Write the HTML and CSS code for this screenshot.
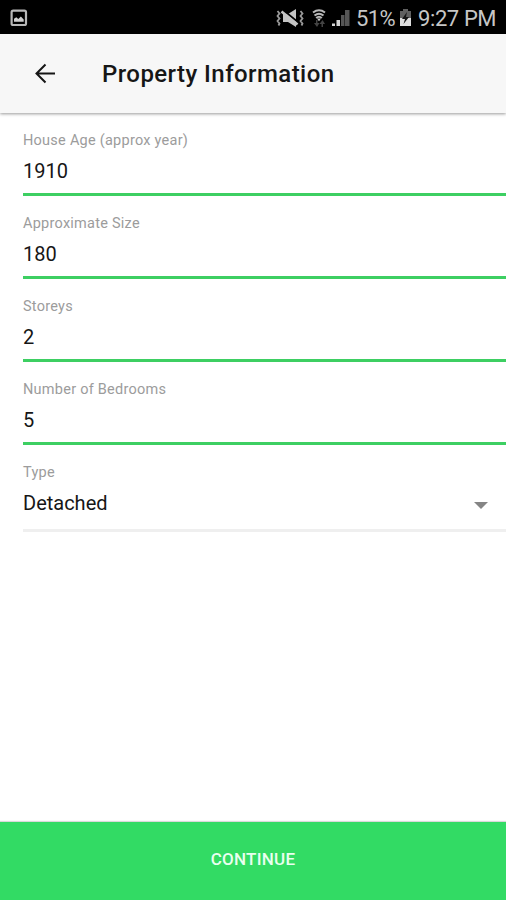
FILE: index.html
```
<!DOCTYPE html>
<html lang="en">
<head>
<meta charset="utf-8">
<title>Property Information</title>
<link rel="stylesheet" href="styles.css">
</head>
<body>
<div class="status">
  <svg class="picture" width="18" height="18" viewBox="0 0 18 18"><rect x="1.600" y="1.600" width="14.400" height="14.400" rx="1.600" fill="none" stroke="#b8b8b8" stroke-width="2.200"/><path d="M4 12.800V9.800l2.300-1.600 2 1.800 2.600-2.400 2.800 3v2.200z" fill="#d0d0d0"/></svg>
  <svg class="mute" width="28" height="20" viewBox="0 0 28 20"><path d="M7 6h5l8-5v18l-8-5H7z" fill="#c4c4c4"/><path d="M7 2l16 13" stroke="#000" stroke-width="2"/><path d="M5.500 3.500l16 13" stroke="#c4c4c4" stroke-width="2.600"/><path d="M1.500 3l2 2.500-2 2.500 2 2.500-2 2.500 2 2.500-1 2M24.500 3l2 2.500-2 2.500 2 2.500-2 2.500 2 2.500-1 2" fill="none" stroke="#999" stroke-width="1.800"/></svg>
  <svg class="wifi" width="16" height="20" viewBox="0 0 16 20"><path d="M2 4.500Q8 0 14 4.500M3.500 7.500Q8 4 12.500 7.500M5.200 10Q8 7.500 10.800 10" fill="none" stroke="#b8b8b8" stroke-width="2"/><path d="M6 10.500h4l-2 2.800z" fill="#c8c8c8"/><path d="M5 12v3H3l3 4 2.500-4h-2v-3zM10.500 19v-3h-2l3-4 2.500 4h-2v3z" fill="#444"/></svg>
  <svg class="signal" width="18" height="18" viewBox="0 0 18 18"><path d="M0 14.500h3V17H0zM4.500 11h3.500v6H4.500z" fill="#d5d5d5"/><path d="M9 6h3.500v11H9zM13 1h4.500v16H13z" fill="#555"/></svg>
  <span class="percent">51%</span>
  <svg class="battery" width="13" height="18" viewBox="0 0 13 18"><path d="M4 0h5v2h3v15H1V2h3z" fill="#606060"/><path d="M1 9h11v8H1z" fill="#dedede"/><path d="M8 3L3 10h3l-1.500 5L10 8H7z" fill="#161616"/></svg>
  <span class="clock">9:27 PM</span>
</div>
<header class="bar">
  <svg class="back" width="22" height="22" viewBox="0 0 22 22"><path d="M21 10.500H3M11.500 1.500l-9 9 9 9" fill="none" stroke="#161616" stroke-width="2"/></svg>
  <h1 class="title">Property Information</h1>
</header>
<main class="form">
  <div class="field"><div class="label">House Age (approx year)</div><div class="value">1910</div></div>
  <div class="field"><div class="label">Approximate Size</div><div class="value">180</div></div>
  <div class="field"><div class="label">Storeys</div><div class="value">2</div></div>
  <div class="field"><div class="label">Number of Bedrooms</div><div class="value">5</div></div>
  <div class="field select"><div class="label">Type</div><div class="value">Detached<span class="caret"></span></div></div>
</main>
<footer class="continue">CONTINUE</footer>
</body>
</html>
```
FILE: styles.css
```
* { box-sizing: border-box; }
body {
  margin: 0;
  height: 900px;
  display: flex;
  flex-direction: column;
  overflow: hidden;
  background: #fff;
  color: #161616;
  font-family: Roboto, "Liberation Sans", sans-serif;
}
.status {
  flex: none;
  height: 34px;
  display: flex;
  align-items: center;
  padding: 2px 11px 0 10px;
  background: #000;
  color: #c6c6c6;
  font-size: 22px;
  line-height: 30px;
  white-space: nowrap;
}
.status svg { flex: none; }
.status span { padding-top: 1px; }
.mute { margin-left: auto; }
.wifi { margin-left: 7px; }
.signal { margin-left: 5px; }
.percent { width: 39px; margin-left: 6px; letter-spacing: -0.6px; }
.battery { margin-left: 4px; }
.clock { width: 77px; margin-left: 6px; letter-spacing: -0.4px; }
.bar {
  flex: none;
  position: relative;
  height: 79px;
  display: flex;
  align-items: center;
  padding-left: 34px;
  background: #f7f7f7;
  box-shadow: 0 1px 3px rgba(0, 0, 0, 0.4);
}
.title {
  margin: 0 0 0 46px;
  font-size: 24px;
  font-weight: 500;
  line-height: 30px;
  letter-spacing: 0.43px;
}
.form {
  flex: 1;
  padding-left: 23px;
}
.field {
  height: 83px;
  padding-top: 18px;
  border-bottom: 3px solid #3dcf62;
}
.label {
  color: #9c9c9c;
  font-size: 14.5px;
  line-height: 20px;
  letter-spacing: 0.25px;
}
.value {
  display: flex;
  align-items: center;
  justify-content: space-between;
  margin-top: 7px;
  font-size: 20px;
  line-height: 26px;
}
.select {
  height: 87px;
  border-bottom-color: #efefef;
}
.caret {
  margin: 5px 18px 0 0;
  border: 7px solid transparent;
  border-top-color: #858585;
  border-bottom: 0;
}
.continue {
  flex: none;
  height: 78px;
  display: flex;
  align-items: center;
  justify-content: center;
  padding-bottom: 4px;
  background: #32db64;
  box-shadow: 0 -1px 1px rgba(0, 0, 0, 0.15);
  color: #e9ffef;
  font-size: 17px;
  font-weight: 500;
  letter-spacing: 0.25px;
}
```
